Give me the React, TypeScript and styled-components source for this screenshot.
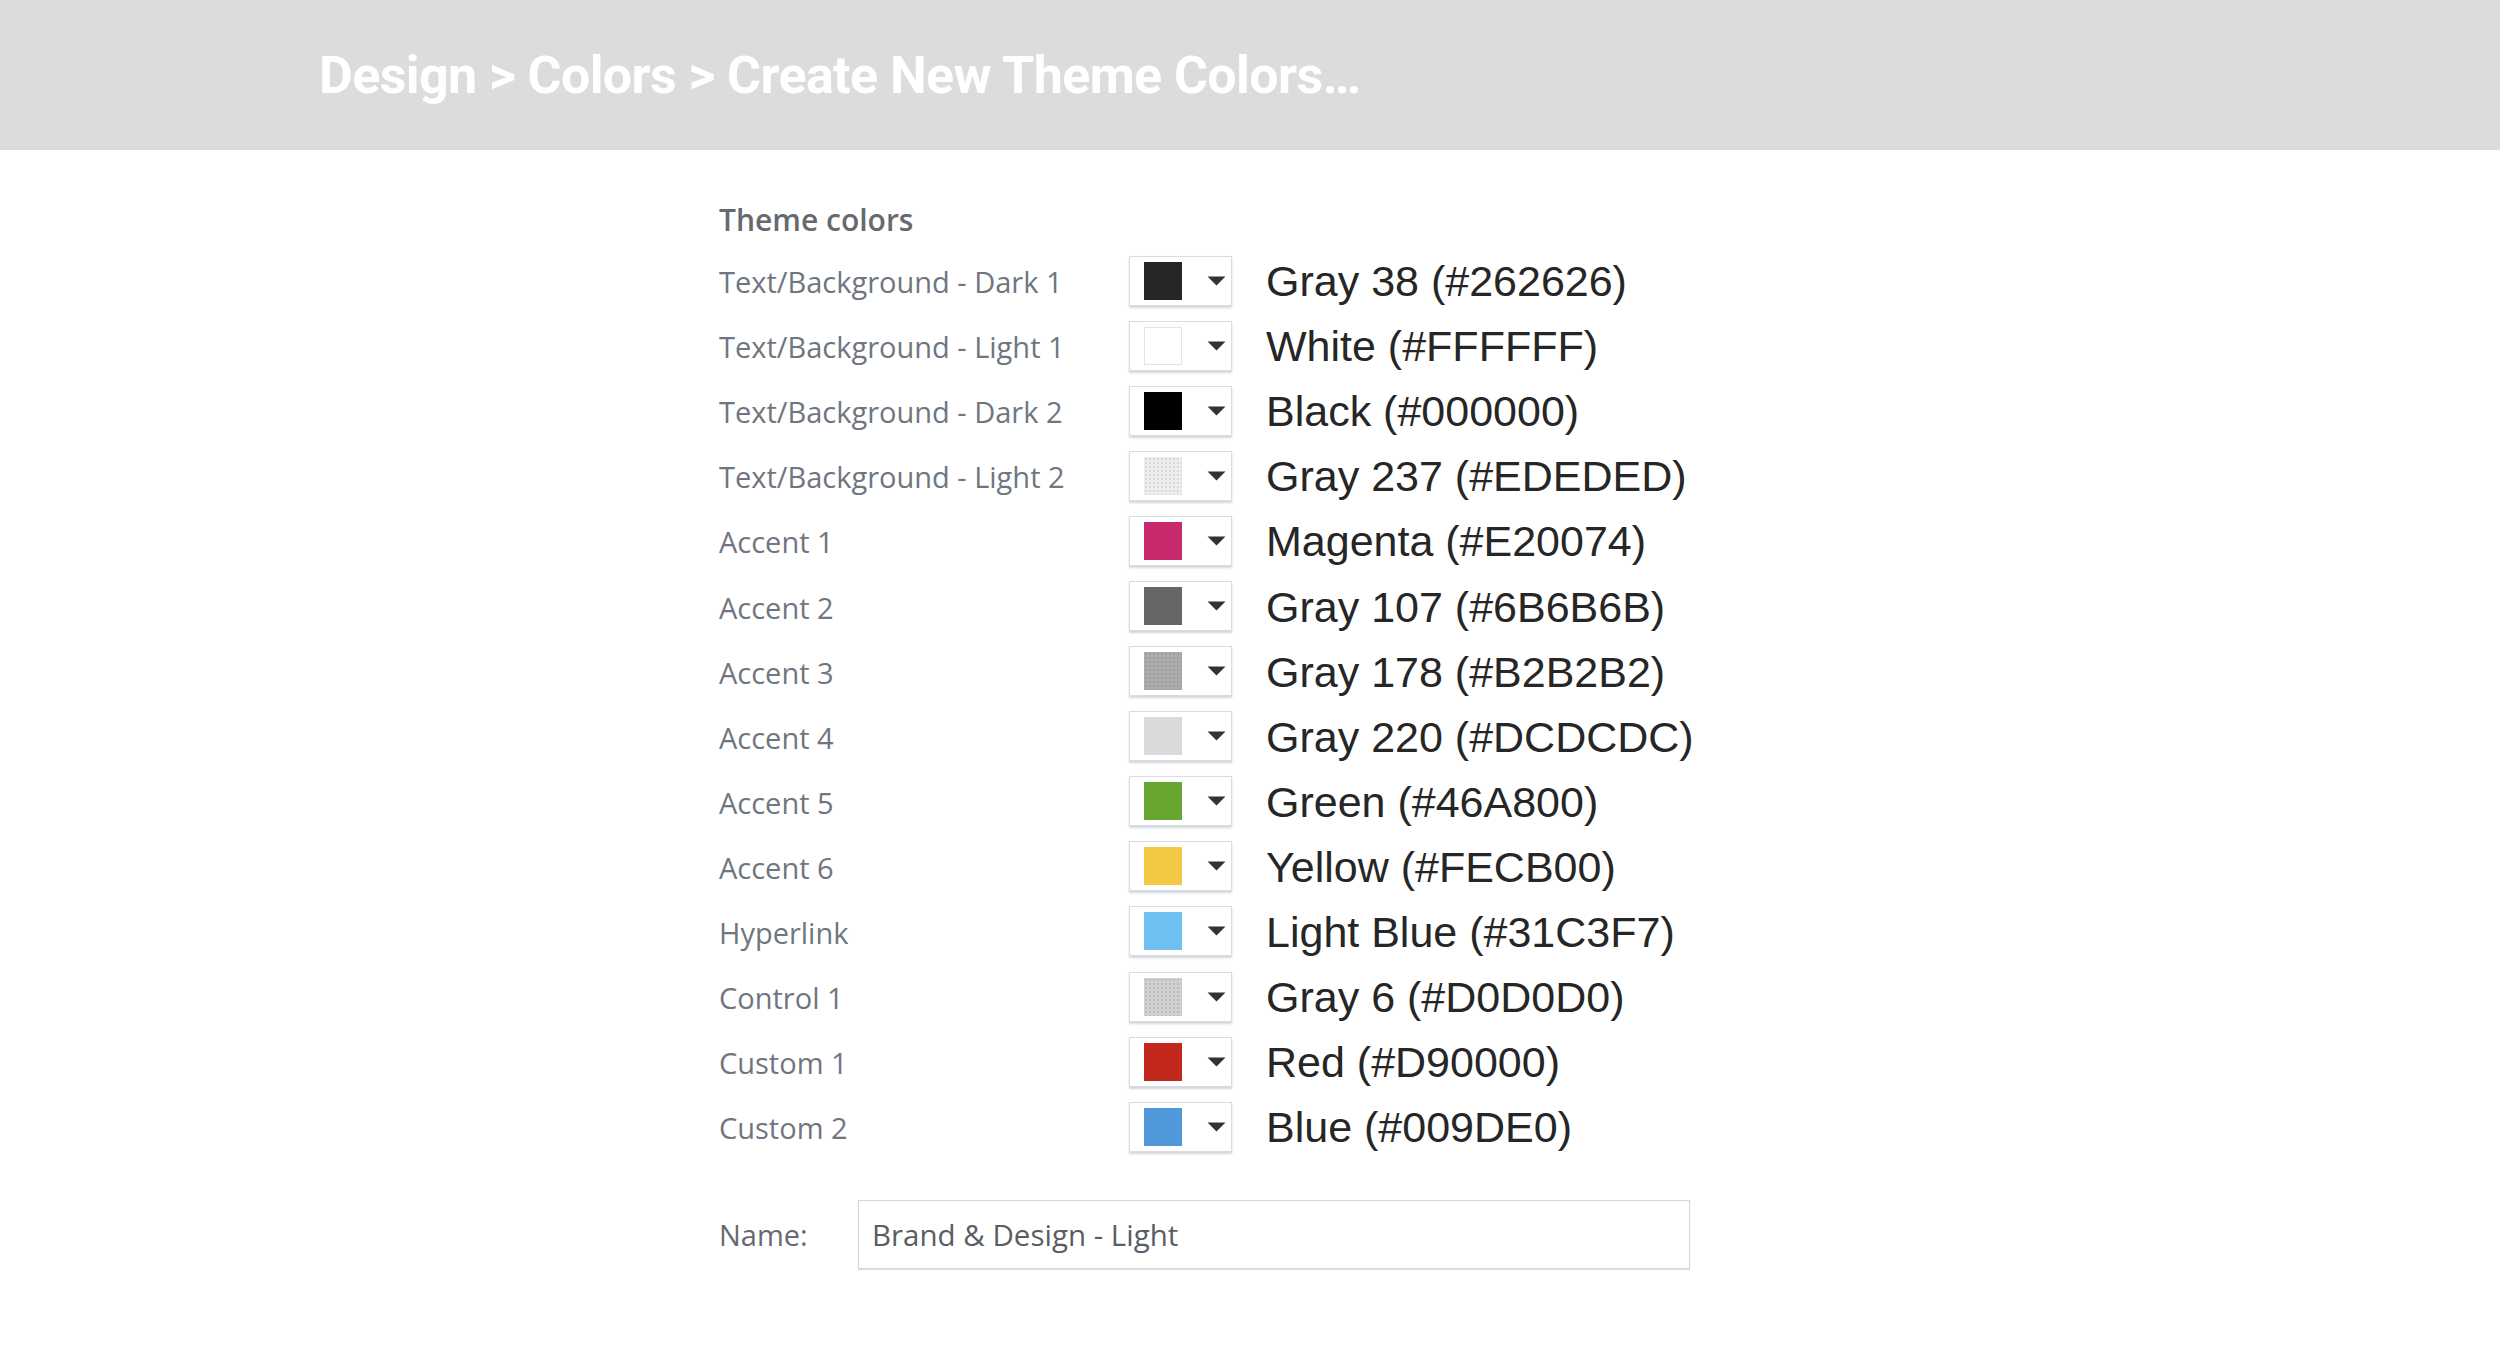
import React from "react";
import styled, { createGlobalStyle, css } from "styled-components";

const Global = createGlobalStyle`
  html, body { margin: 0; padding: 0; background: #ffffff; }
  body { width: 2500px; min-height: 1354px; overflow: hidden; }
`;

const Page = styled.div`
  width: 2500px;
  min-height: 1354px;
  background: #ffffff;
`;

const Header = styled.header`
  height: 150px;
  background: #dcdcdc;
  display: flex;
  align-items: center;
  padding-left: 319px;
  box-sizing: border-box;
`;

const Breadcrumb = styled.h1`
  margin: 0;
  font-family: Roboto, "Liberation Sans", sans-serif;
  font-weight: 700;
  font-size: 52px;
  line-height: 1;
  color: #ffffff;
  letter-spacing: -0.6px;
  padding-top: 2px;
`;

const Content = styled.main`
  padding: 48px 0 0 719px;
`;

const Title = styled.h2`
  margin: 0 0 7px 0;
  font-family: "Open Sans", "Noto Sans", sans-serif;
  font-weight: 600;
  font-size: 30px;
  line-height: 44px;
  color: #666a6e;
`;

const Rows = styled.div`
  display: grid;
  grid-template-columns: 410px 103px auto;
  grid-auto-rows: 65.1px;
  align-items: center;
`;

const Label = styled.div`
  font-family: "Open Sans", "Noto Sans", sans-serif;
  font-size: 29px;
  color: #6f7680;
  line-height: 1;
`;

const Picker = styled.div`
  width: 103px;
  height: 50px;
  box-sizing: border-box;
  border: 1px solid #d9dde2;
  background: #ffffff;
  box-shadow: 0 2px 2px rgba(170, 182, 196, 0.55);
  display: flex;
  align-items: center;
  padding-left: 14px;
  margin-top: -2px;
`;

const Swatch = styled.span<{ $color: string; $bordered?: boolean; $dotted?: boolean }>`
  width: 38px;
  height: 38px;
  box-sizing: border-box;
  background-color: ${(p) => p.$color};
  ${(p) =>
    p.$bordered &&
    css`
      border: 1px solid #e4e4e4;
    `}
  ${(p) =>
    p.$dotted &&
    css`
      background-image: radial-gradient(rgba(0, 0, 0, 0.09) 0.8px, transparent 1.2px);
      background-size: 4px 4px;
    `}
`;

const Arrow = styled.svg`
  width: 19px;
  height: 10px;
  margin-left: 25px;
  display: block;
`;

const ColorName = styled.div`
  font-family: "Liberation Sans", Arial, sans-serif;
  font-size: 43px;
  color: #262626;
  line-height: 1;
  padding-left: 34px;
  white-space: nowrap;
`;

const NameRow = styled.div`
  display: flex;
  align-items: center;
  margin-top: 40px;
`;

const NameLabel = styled.label`
  width: 139px;
  font-family: "Open Sans", "Noto Sans", sans-serif;
  font-size: 29px;
  color: #666a70;
`;

const NameInput = styled.div`
  width: 832px;
  height: 69px;
  box-sizing: border-box;
  border: 1px solid #d3d7dc;
  box-shadow: 0 1px 1px rgba(190, 198, 208, 0.5);
  display: flex;
  align-items: center;
  padding-left: 13px;
  font-family: "Open Sans", "Noto Sans", sans-serif;
  font-size: 29.5px;
  color: #5a5e64;
`;

type Item = {
  label: string;
  name: string;
  color: string;
  bordered?: boolean;
  dotted?: boolean;
};

const items: Item[] = [
  { label: "Text/Background - Dark 1", name: "Gray 38 (#262626)", color: "#262626" },
  { label: "Text/Background - Light 1", name: "White (#FFFFFF)", color: "#ffffff", bordered: true },
  { label: "Text/Background - Dark 2", name: "Black (#000000)", color: "#000000" },
  { label: "Text/Background - Light 2", name: "Gray 237 (#EDEDED)", color: "#ededed", dotted: true },
  { label: "Accent 1", name: "Magenta (#E20074)", color: "#c92a6e" },
  { label: "Accent 2", name: "Gray 107 (#6B6B6B)", color: "#666666" },
  { label: "Accent 3", name: "Gray 178 (#B2B2B2)", color: "#acacac", dotted: true },
  { label: "Accent 4", name: "Gray 220 (#DCDCDC)", color: "#d9dadb" },
  { label: "Accent 5", name: "Green (#46A800)", color: "#68a632" },
  { label: "Accent 6", name: "Yellow (#FECB00)", color: "#f3c944" },
  { label: "Hyperlink", name: "Light Blue (#31C3F7)", color: "#6ec0f0" },
  { label: "Control 1", name: "Gray 6 (#D0D0D0)", color: "#d0d0d0", dotted: true },
  { label: "Custom 1", name: "Red (#D90000)", color: "#c2281c" },
  { label: "Custom 2", name: "Blue (#009DE0)", color: "#4f98da" },
];

export default function App() {
  return (
    <Page>
      <Global />
      <Header>
        <Breadcrumb>Design &gt; Colors &gt; Create New Theme Colors…</Breadcrumb>
      </Header>
      <Content>
        <Title>Theme colors</Title>
        <Rows>
          {items.map((it) => (
            <React.Fragment key={it.label}>
              <Label>{it.label}</Label>
              <Picker>
                <Swatch $color={it.color} $bordered={it.bordered} $dotted={it.dotted} />
                <Arrow viewBox="0 0 19 10">
                  <path d="M0.5 0.5 H18.5 L9.5 9.5 Z" fill="#333333" />
                </Arrow>
              </Picker>
              <ColorName>{it.name}</ColorName>
            </React.Fragment>
          ))}
        </Rows>
        <NameRow>
          <NameLabel>Name:</NameLabel>
          <NameInput>Brand &amp; Design - Light</NameInput>
        </NameRow>
      </Content>
    </Page>
  );
}
